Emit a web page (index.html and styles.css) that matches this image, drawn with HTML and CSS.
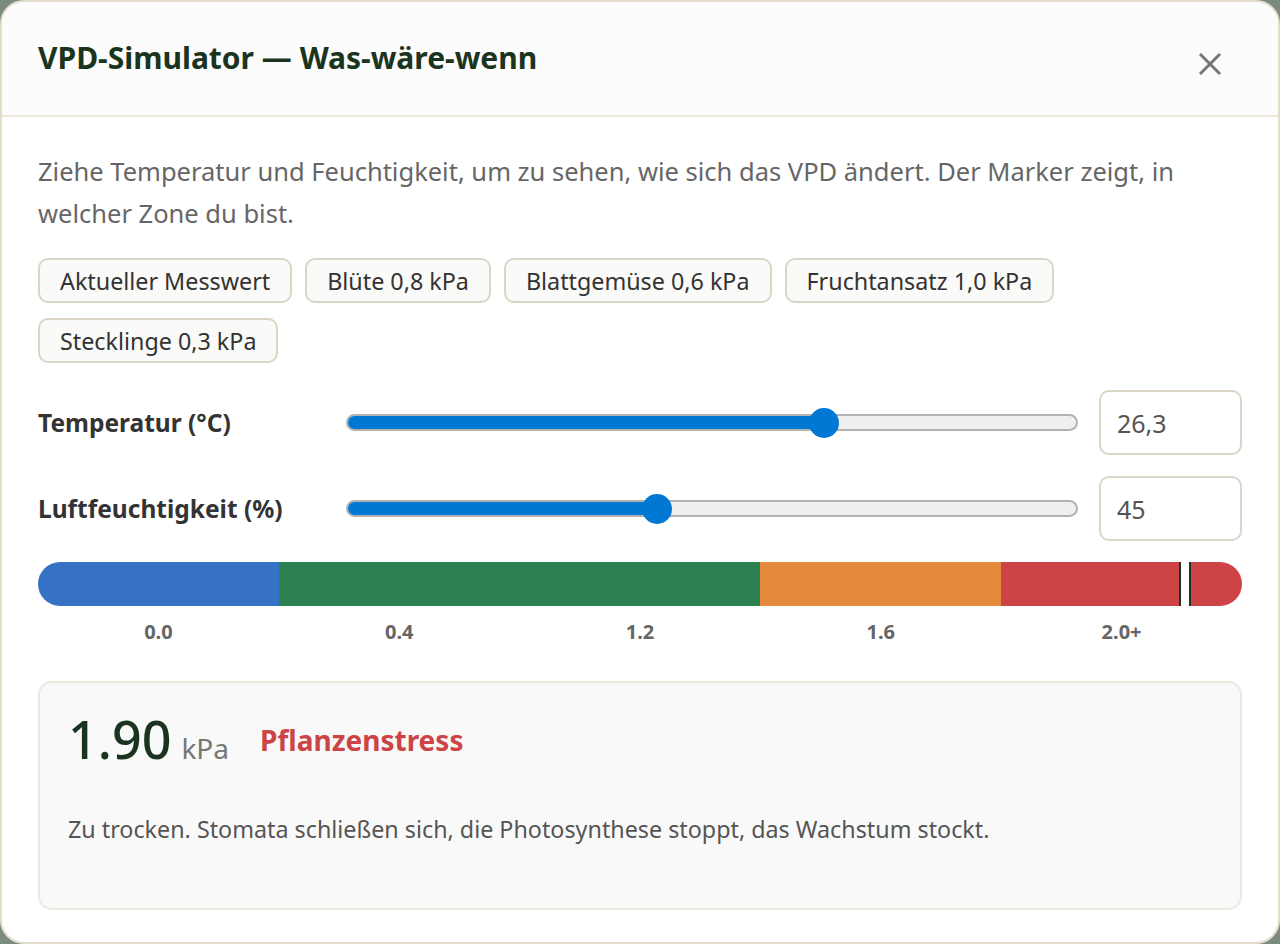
FILE: index.html
```html
<!DOCTYPE html>
<html lang="de">
<head>
<meta charset="utf-8">
<title>VPD-Simulator</title>
<link rel="stylesheet" href="styles.css">
</head>
<body>
<div class="modal">
  <header class="modal-header">
    <h2 class="title">VPD-Simulator — Was-wäre-wenn</h2>
    <button class="close" aria-label="Schließen">
      <svg width="24" height="24" viewBox="0 0 24 24"><path d="M2 2 L22 22 M22 2 L2 22" stroke="#777" stroke-width="3" fill="none"/></svg>
    </button>
  </header>
  <main class="modal-body">
    <p class="intro">Ziehe Temperatur und Feuchtigkeit, um zu sehen, wie sich das VPD ändert. Der Marker zeigt, in welcher Zone du bist.</p>
    <div class="chips">
      <button class="chip">Aktueller Messwert</button>
      <button class="chip">Blüte 0,8 kPa</button>
      <button class="chip">Blattgemüse 0,6 kPa</button>
      <button class="chip">Fruchtansatz 1,0 kPa</button>
      <button class="chip">Stecklinge 0,3 kPa</button>
    </div>
    <div class="control">
      <label class="control-label">Temperatur (°C)</label>
      <div class="slider">
        <div class="track"><div class="fill" style="width:65.3%"></div></div>
        <div class="thumb" style="left:65.3%"></div>
      </div>
      <div class="num">26,3</div>
    </div>
    <div class="control">
      <label class="control-label">Luftfeuchtigkeit (%)</label>
      <div class="slider">
        <div class="track"><div class="fill" style="width:42.5%"></div></div>
        <div class="thumb" style="left:42.5%"></div>
      </div>
      <div class="num">45</div>
    </div>
    <div class="zonebar">
      <div class="zone z-blue"></div>
      <div class="zone z-green"></div>
      <div class="zone z-orange"></div>
      <div class="zone z-red"></div>
      <div class="marker" style="left:95.3%"></div>
    </div>
    <div class="zone-labels">
      <span>0.0</span><span>0.4</span><span>1.2</span><span>1.6</span><span>2.0+</span>
    </div>
    <section class="result">
      <div class="result-head">
        <div class="reading"><span class="value">1.90</span><span class="unit">kPa</span></div>
        <span class="status">Pflanzenstress</span>
      </div>
      <p class="result-text">Zu trocken. Stomata schließen sich, die Photosynthese stoppt, das Wachstum stockt.</p>
    </section>
  </main>
</div>
</body>
</html>
```
FILE: styles.css
```css
* { box-sizing: border-box; }
html, body { margin: 0; padding: 0; }
body {
  background: #7c8b7f;
  font-family: "Noto Sans", "Open Sans", sans-serif;
  width: 1280px;
  height: 944px;
  overflow: hidden;
}
.modal {
  width: 1280px;
  height: 944px;
  background: #ffffff;
  border: 2px solid #e4ddcc;
  border-radius: 24px;
  overflow: hidden;
  display: flex;
  flex-direction: column;
}
.modal-header {
  height: 115px;
  flex: none;
  background: #fcfcfc;
  border-bottom: 2px solid #eee8dc;
  display: flex;
  align-items: center;
  justify-content: space-between;
  padding: 0 56px 0 36px;
}
.title {
  margin: 0;
  font-size: 30px;
  font-weight: 700;
  color: #1b3420;
  position: relative;
  top: -1px;
}
.close {
  border: 0;
  background: none;
  padding: 0;
  width: 24px;
  height: 24px;
  display: flex;
  cursor: pointer;
  position: relative;
  top: 5px;
}
.modal-body {
  padding: 33px 36px 0 36px;
  display: flex;
  flex-direction: column;
}
.intro {
  margin: 0;
  font-size: 25.5px;
  line-height: 42px;
  color: #666;
}
.chips {
  display: flex;
  flex-wrap: wrap;
  gap: 15px 13px;
  margin-top: 24px;
}
.chip {
  font-family: inherit;
  height: 45px;
  padding: 0 20px;
  font-size: 23.3px;
  color: #333;
  background: #fafaf8;
  border: 2px solid #dbd5c7;
  border-radius: 10px;
}
.control {
  display: flex;
  align-items: center;
  margin-top: 27px;
}
.control + .control { margin-top: 21px; }
.control-label {
  width: 308px;
  flex: none;
  font-size: 24.5px;
  font-weight: 700;
  color: #333;
}
.slider {
  flex: 1;
  position: relative;
  height: 30px;
  display: flex;
  align-items: center;
  margin-right: 21px;
}
.track {
  width: 100%;
  height: 17px;
  background: #efefef;
  border: 2px solid #b2b2b2;
  border-radius: 9px;
  overflow: hidden;
  position: relative;
}
.fill {
  background: #0078d4;
  margin: -2px 0 0 -2px;
  height: 17px;
  border: 2px solid #2f6ea8;
  border-right: 0;
  border-radius: 9px 0 0 9px;
}
.thumb {
  position: absolute;
  top: 0;
  width: 30px;
  height: 30px;
  margin-left: -15px;
  border-radius: 50%;
  background: #0078d4;
}
.num {
  width: 143px;
  height: 65px;
  flex: none;
  border: 2px solid #dbd5c7;
  border-radius: 10px;
  padding: 0 16px;
  display: flex;
  align-items: center;
  font-size: 25px;
  color: #555;
}
.zonebar {
  margin-top: 21px;
  height: 44px;
  border-radius: 22px;
  overflow: hidden;
  display: flex;
  position: relative;
}
.zone { height: 100%; }
.z-blue { flex: 1; background: #3572c6; }
.z-green { flex: 2; background: #2d8150; }
.z-orange { flex: 1; background: #e5893b; }
.z-red { flex: 1; background: #cd4446; }
.marker {
  position: absolute;
  top: 0;
  bottom: 0;
  width: 12px;
  margin-left: -6px;
  background: #fff;
  border-left: 2px solid #1b3420;
  border-right: 2px solid #1b3420;
}
.zone-labels {
  display: grid;
  grid-template-columns: repeat(5, 1fr);
  margin-top: 12px;
  font-size: 20px;
  line-height: 27px;
  font-weight: 700;
  color: #666;
  text-align: center;
}
.result {
  margin-top: 36px;
  height: 229px;
  background: #f9f9f9;
  border: 2px solid #eee9de;
  border-radius: 14px;
  padding: 27px 28px 0 28px;
}
.result-head {
  display: flex;
  align-items: center;
  height: 60px;
}
.reading {
  display: flex;
  align-items: baseline;
  line-height: 60px;
  padding-top: 7px;
}
.value {
  font-size: 52px;
  font-weight: 500;
  color: #1b3420;
}
.unit {
  font-size: 28px;
  color: #777;
  margin-left: 10px;
}
.status {
  font-size: 28px;
  font-weight: 700;
  color: #cd4446;
  margin-left: 31px;
  line-height: 36px;
}
.result-text {
  margin: 43px 0 0 0;
  font-size: 23.3px;
  line-height: 32px;
  color: #555;
}
```
